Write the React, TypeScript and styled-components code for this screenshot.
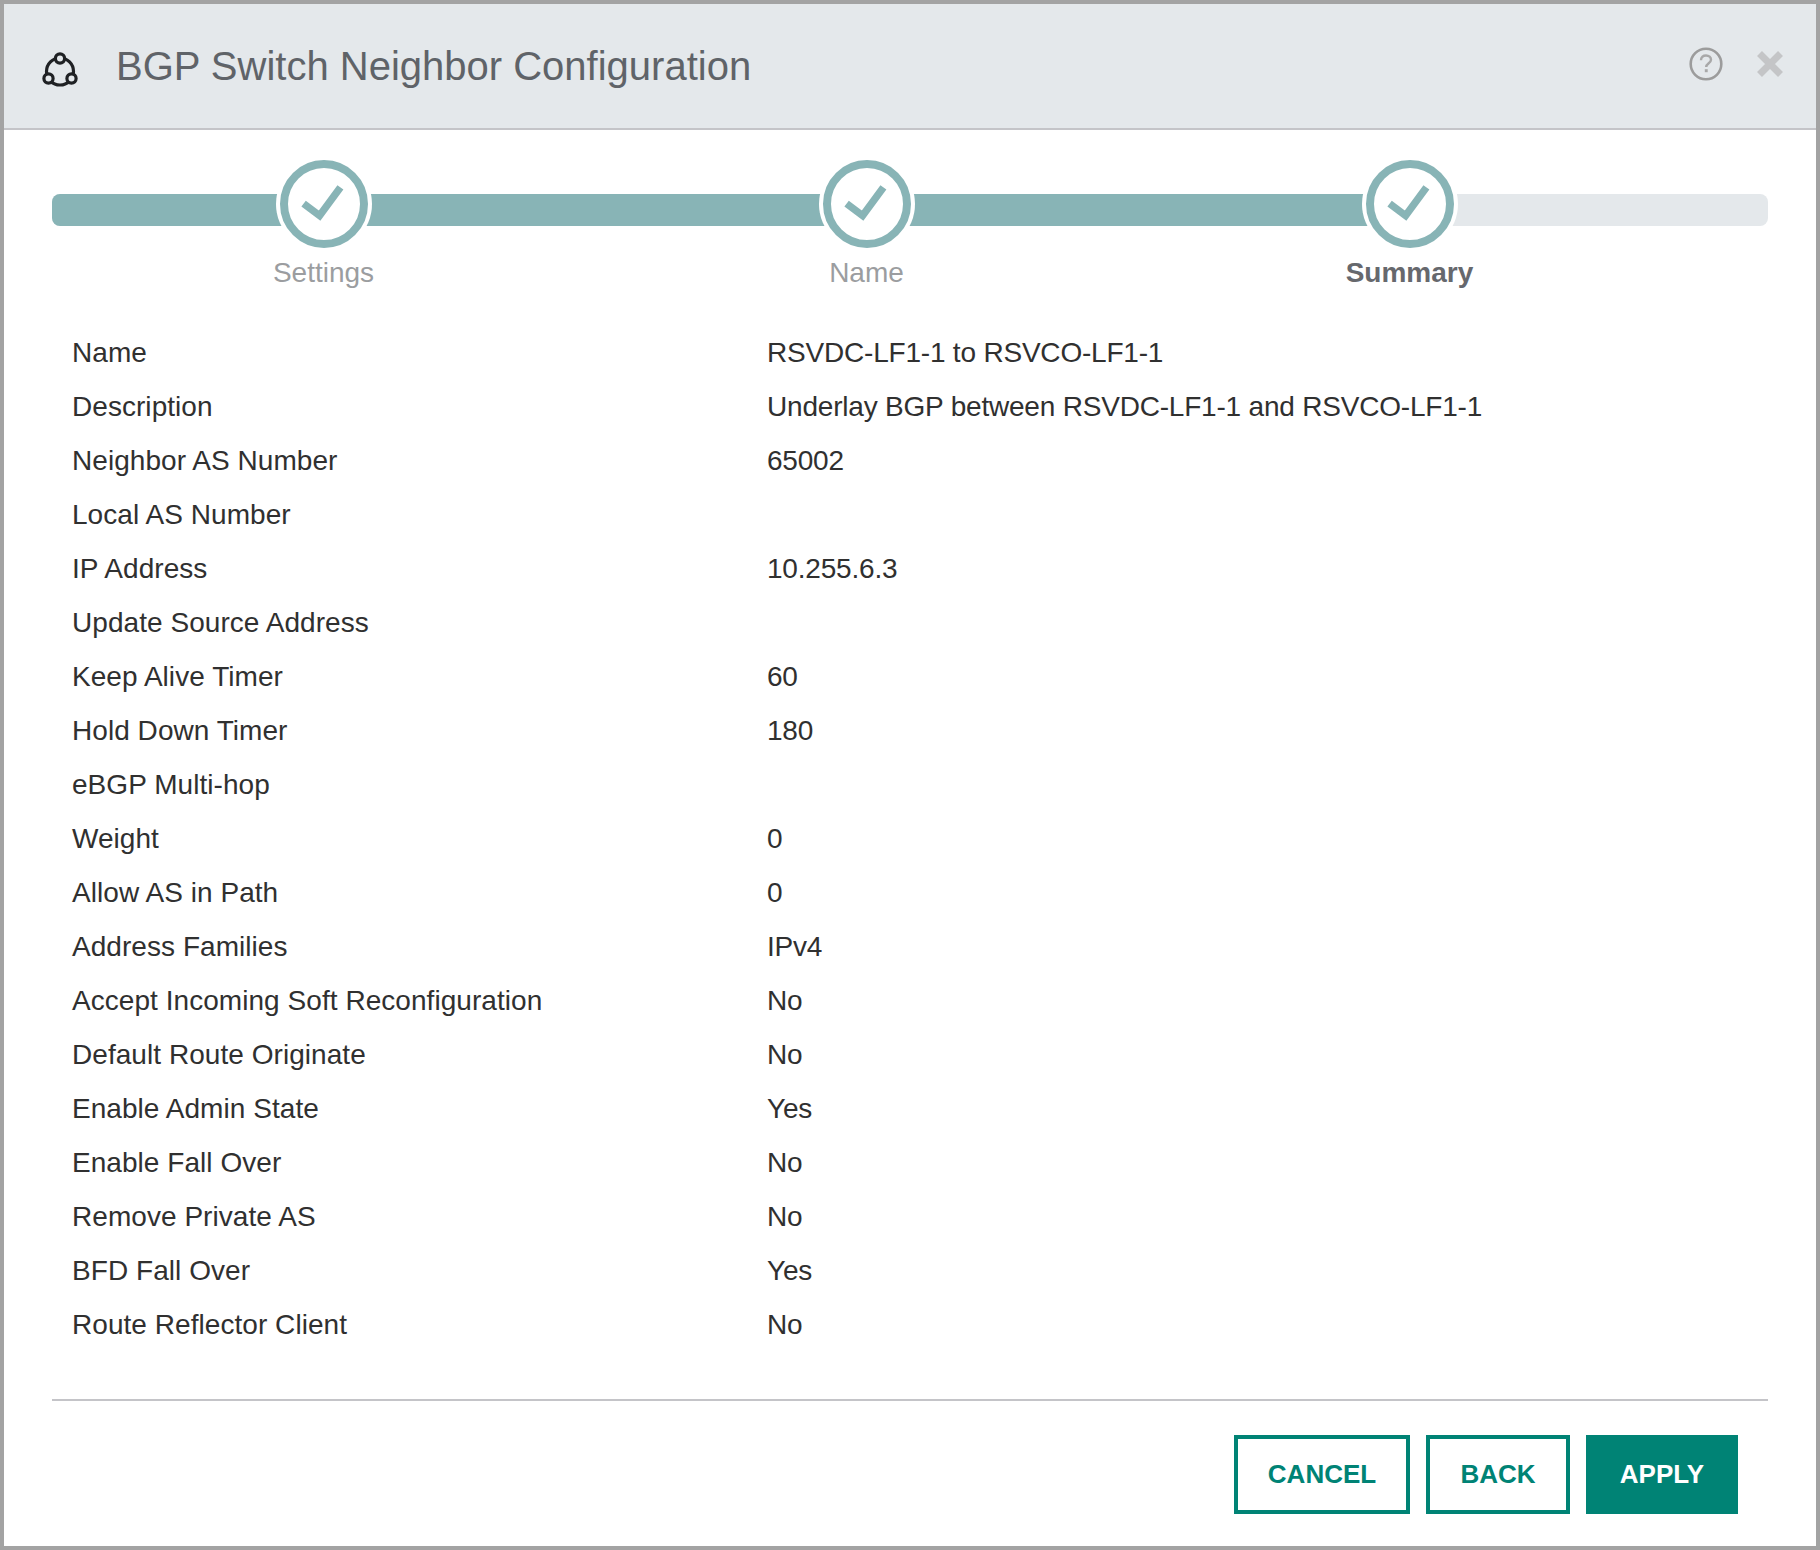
import React from "react";
import styled, { createGlobalStyle } from "styled-components";

const Global = createGlobalStyle`
  html, body { margin: 0; padding: 0; background: #fff; }
  body { font-family: "Liberation Sans", Arial, sans-serif; }
`;

const Dialog = styled.div`
  width: 1820px;
  height: 1550px;
  box-sizing: border-box;
  border: 4px solid #a3a3a3;
  display: flex;
  flex-direction: column;
  background: #fff;
`;

const Header = styled.header`
  height: 126px;
  flex: none;
  box-sizing: border-box;
  background: #e4e8eb;
  border-bottom: 2px solid #c4c4c8;
  display: flex;
  align-items: center;
  padding: 0 32px 0 37px;
`;

const TitleIcon = styled.svg`
  flex: none;
  margin-top: 7px;
`;

const Title = styled.h1`
  margin: 0 0 0 37px;
  flex: 1;
  font-size: 40px;
  font-weight: 400;
  color: #5f6368;
`;

const HeaderIcons = styled.div`
  display: flex;
  align-items: center;
  gap: 33px;
  margin-bottom: 5px;
`;

const Body = styled.main`
  flex: 1;
  display: flex;
  flex-direction: column;
  padding: 30px 48px 0 48px;
`;

const Stepper = styled.div`
  position: relative;
  height: 130px;
  flex: none;
`;

const Track = styled.div`
  position: absolute;
  top: 34px;
  left: 0;
  right: 0;
  height: 32px;
  border-radius: 8px;
  overflow: hidden;
  background: #e4e8eb;
`;

const TrackFill = styled.div`
  width: 1358px;
  height: 100%;
  background: #88b4b6;
`;

const Steps = styled.div`
  position: absolute;
  top: 0;
  left: 0;
  display: grid;
  grid-template-columns: repeat(3, 543px);
`;

const Step = styled.div`
  display: flex;
  flex-direction: column;
  align-items: center;
`;

const StepCircle = styled.div`
  width: 88px;
  height: 88px;
  box-sizing: border-box;
  border-radius: 50%;
  border: 8px solid #88b4b6;
  background: #fff;
  box-shadow: 0 0 0 4px #fff;
`;

const CheckMark = styled.svg`
  display: block;
`;

const StepLabel = styled.div<{ $active?: boolean }>`
  margin-top: 9px;
  font-size: 28px;
  line-height: 32px;
  font-weight: ${(p) => (p.$active ? 700 : 400)};
  color: ${(p) => (p.$active ? "#66686d" : "#9b9da0")};
`;

const Summary = styled.dl`
  margin: 0;
  padding: 36px 0 0 20px;
  display: grid;
  grid-template-columns: 695px 1fr;
  grid-auto-rows: 54px;
  align-items: center;
  font-size: 28px;
  color: #303030;
`;

const Term = styled.dt`
  margin: 0;
  letter-spacing: 0.05px;
`;

const Value = styled.dd`
  margin: 0;
  letter-spacing: -0.2px;
`;

const Footer = styled.footer`
  margin-top: 47px;
  border-top: 2px solid #c4c4c8;
  padding: 34px 30px 0 0;
  display: flex;
  justify-content: flex-end;
  gap: 16px;
`;

const Button = styled.button<{ $primary?: boolean; $w: number }>`
  width: ${(p) => p.$w}px;
  height: 79px;
  box-sizing: border-box;
  border: 4px solid #008375;
  background: ${(p) => (p.$primary ? "#008375" : "#fff")};
  color: ${(p) => (p.$primary ? "#fff" : "#008375")};
  font-family: "Liberation Sans", Arial, sans-serif;
  font-size: 26px;
  font-weight: 700;
  padding: 0;
`;

const rows: [string, string][] = [
  ["Name", "RSVDC-LF1-1 to RSVCO-LF1-1"],
  ["Description", "Underlay BGP between RSVDC-LF1-1 and RSVCO-LF1-1"],
  ["Neighbor AS Number", "65002"],
  ["Local AS Number", ""],
  ["IP Address", "10.255.6.3"],
  ["Update Source Address", ""],
  ["Keep Alive Timer", "60"],
  ["Hold Down Timer", "180"],
  ["eBGP Multi-hop", ""],
  ["Weight", "0"],
  ["Allow AS in Path", "0"],
  ["Address Families", "IPv4"],
  ["Accept Incoming Soft Reconfiguration", "No"],
  ["Default Route Originate", "No"],
  ["Enable Admin State", "Yes"],
  ["Enable Fall Over", "No"],
  ["Remove Private AS", "No"],
  ["BFD Fall Over", "Yes"],
  ["Route Reflector Client", "No"],
];

const Check = () => (
  <CheckMark width="72" height="72" viewBox="0 0 72 72">
    <path d="M15.6 35.6 L31.6 47.6 L52.4 19.4" fill="none" stroke="#88b4b6" strokeWidth="7.4" />
  </CheckMark>
);

const NetIcon = () => (
  <TitleIcon width="38" height="36" viewBox="0 0 38 36" fill="#e4e8eb" stroke="#1f2124" strokeWidth="3.2">
    <circle cx="19" cy="19.5" r="13.5" />
    <circle cx="19" cy="6.5" r="4.6" />
    <circle cx="7.5" cy="26.5" r="4.6" />
    <circle cx="30.5" cy="26.5" r="4.6" />
  </TitleIcon>
);

const HelpIcon = () => (
  <svg width="34" height="34" viewBox="0 0 34 34" fill="none">
    <circle cx="17" cy="17" r="15.3" stroke="#9c9c9c" strokeWidth="2.6" />
    <path d="M12 13.2 C12 10 14.2 8.5 17 8.5 C20 8.5 22 10.3 22 12.8 C22 16.2 17.2 16.2 17.2 20" stroke="#a8a8a8" strokeWidth="2.4" />
    <rect x="15.8" y="22.2" width="2.9" height="3" fill="#a8a8a8" />
  </svg>
);

const CloseIcon = () => (
  <svg width="28" height="28" viewBox="0 0 28 28">
    <path d="M3.5 3.5 L24.5 24.5 M24.5 3.5 L3.5 24.5" stroke="#c4c5c7" strokeWidth="7" />
  </svg>
);

const steps = ["Settings", "Name", "Summary"];

export default function App() {
  return (
    <Dialog>
      <Global />
      <Header>
        <NetIcon />
        <Title>BGP Switch Neighbor Configuration</Title>
        <HeaderIcons>
          <HelpIcon />
          <CloseIcon />
        </HeaderIcons>
      </Header>
      <Body>
        <Stepper>
          <Track>
            <TrackFill />
          </Track>
          <Steps>
            {steps.map((s, i) => (
              <Step key={s}>
                <StepCircle>
                  <Check />
                </StepCircle>
                <StepLabel $active={i === 2}>{s}</StepLabel>
              </Step>
            ))}
          </Steps>
        </Stepper>
        <Summary>
          {rows.map(([k, v]) => (
            <React.Fragment key={k}>
              <Term>{k}</Term>
              <Value>{v}</Value>
            </React.Fragment>
          ))}
        </Summary>
        <Footer>
          <Button $w={176}>CANCEL</Button>
          <Button $w={144}>BACK</Button>
          <Button $w={152} $primary>APPLY</Button>
        </Footer>
      </Body>
    </Dialog>
  );
}
